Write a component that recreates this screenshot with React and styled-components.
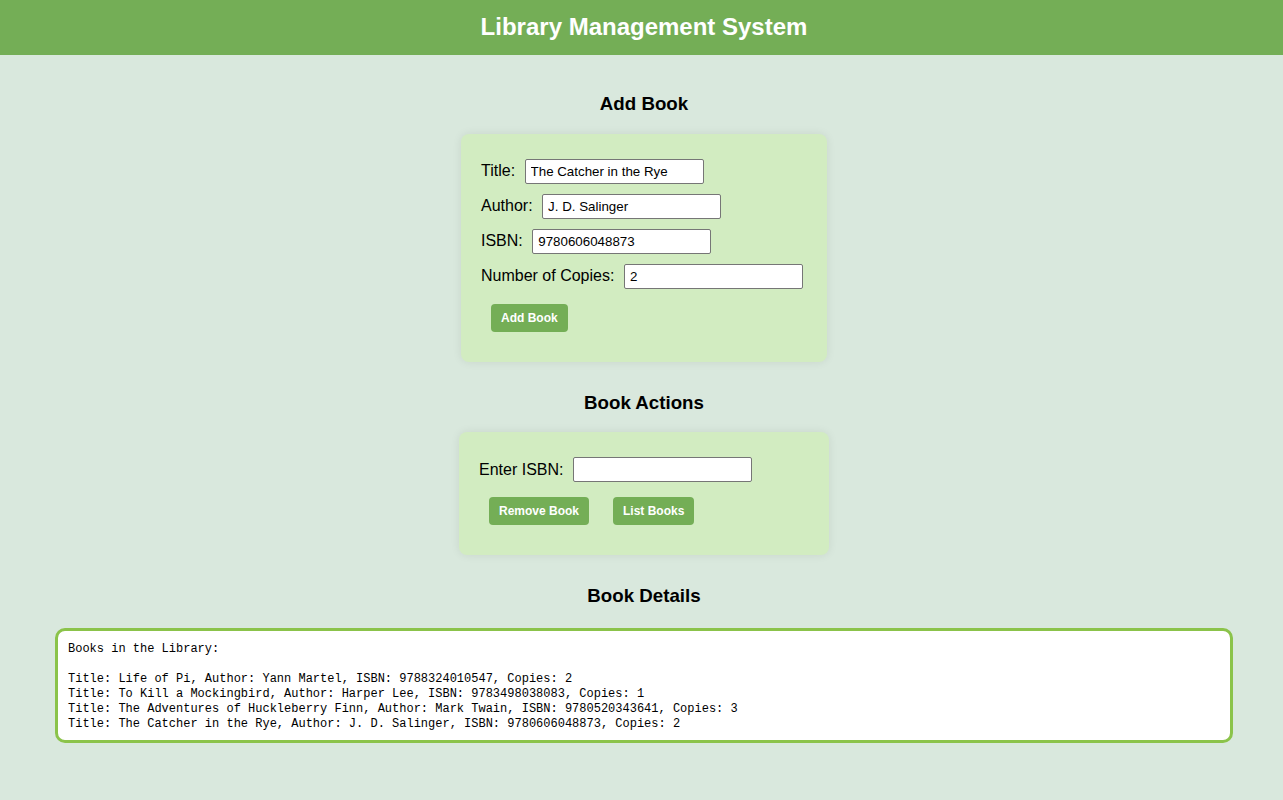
import React from "react";
import styled, { createGlobalStyle } from "styled-components";

const GlobalStyle = createGlobalStyle`
  html, body {
    margin: 0;
    padding: 0;
    background: #d9e8dd;
    font-family: "Liberation Sans", Arial, sans-serif;
    color: #000;
  }
  * { box-sizing: border-box; }
`;

const Header = styled.header`
  height: 55px;
  background: #74ae56;
  display: flex;
  align-items: center;
  justify-content: center;
  padding: 0 0 2px 5px;
`;

const AppTitle = styled.h1`
  margin: 0;
  color: #fff;
  font-size: 24px;
  font-weight: bold;
  line-height: 28px;
`;

const Main = styled.main`
  display: flex;
  flex-direction: column;
  align-items: center;
  padding: 38px 0 40px 5px;
`;

const SectionTitle = styled.h3`
  margin: 0 0 ${(p) => p.$gap || 18.5}px;
  font-size: 18.72px;
  line-height: 22px;
  font-weight: bold;
`;

const Card = styled.section`
  width: ${(p) => p.$width}px;
  display: flex;
  flex-direction: column;
  background: #d2ecc1;
  border-radius: 8px;
  padding: 20px;
  margin-bottom: 30px;
  box-shadow: 0 0 10px rgba(0, 0, 0, 0.08);
`;

const FieldRow = styled.div`
  display: flex;
  align-items: center;
  gap: 9.5px;
  margin: 5px 0;
`;

const Label = styled.label`
  font-size: 16px;
  line-height: 18px;
`;

const TextInput = styled.input`
  width: 179px;
  height: 25px;
  padding: 4px 5px;
  border: 1px solid #767676;
  border-radius: 2px;
  background: #fff;
  font-family: "Liberation Sans", Arial, sans-serif;
  font-size: 13.33px;
  color: #000;
  outline: none;
`;

const ButtonRow = styled.div`
  display: flex;
  gap: 24px;
  padding: 0 10px;
  margin: 10px 0;
`;

const Button = styled.button`
  background: #74ae56;
  color: #fff;
  border: none;
  border-radius: 4px;
  padding: 7px 10px;
  font-family: "Liberation Sans", Arial, sans-serif;
  font-size: 12px;
  line-height: 14px;
  font-weight: bold;
  cursor: pointer;
`;

const Output = styled.pre`
  align-self: stretch;
  margin: 0 50px;
  background: #fff;
  border: 3px solid #8bc34a;
  border-radius: 10px;
  padding: 11px 10px 8px;
  font-family: "Liberation Mono", "DejaVu Sans Mono", monospace;
  font-size: 12px;
  line-height: 15px;
  color: #000;
  white-space: pre;
`;

const books = [
  { title: "Life of Pi", author: "Yann Martel", isbn: "9788324010547", copies: 2 },
  { title: "To Kill a Mockingbird", author: "Harper Lee", isbn: "9783498038083", copies: 1 },
  { title: "The Adventures of Huckleberry Finn", author: "Mark Twain", isbn: "9780520343641", copies: 3 },
  { title: "The Catcher in the Rye", author: "J. D. Salinger", isbn: "9780606048873", copies: 2 },
];

const outputText =
  "Books in the Library:\n\n" +
  books
    .map(
      (b) =>
        `Title: ${b.title}, Author: ${b.author}, ISBN: ${b.isbn}, Copies: ${b.copies}`
    )
    .join("\n");

export default function App() {
  return (
    <>
      <GlobalStyle />
      <Header>
        <AppTitle>Library Management System</AppTitle>
      </Header>
      <Main>
        <SectionTitle>Add Book</SectionTitle>
        <Card $width={366}>
          <FieldRow>
            <Label htmlFor="title">Title:</Label>
            <TextInput id="title" defaultValue="The Catcher in the Rye" />
          </FieldRow>
          <FieldRow>
            <Label htmlFor="author">Author:</Label>
            <TextInput id="author" defaultValue="J. D. Salinger" />
          </FieldRow>
          <FieldRow>
            <Label htmlFor="isbn">ISBN:</Label>
            <TextInput id="isbn" defaultValue="9780606048873" />
          </FieldRow>
          <FieldRow>
            <Label htmlFor="copies">Number of Copies:</Label>
            <TextInput id="copies" defaultValue="2" />
          </FieldRow>
          <ButtonRow>
            <Button>Add Book</Button>
          </ButtonRow>
        </Card>

        <SectionTitle>Book Actions</SectionTitle>
        <Card $width={370}>
          <FieldRow>
            <Label htmlFor="action-isbn">Enter ISBN:</Label>
            <TextInput id="action-isbn" defaultValue="" />
          </FieldRow>
          <ButtonRow>
            <Button>Remove Book</Button>
            <Button>List Books</Button>
          </ButtonRow>
        </Card>

        <SectionTitle $gap={21}>Book Details</SectionTitle>
        <Output>{outputText}</Output>
      </Main>
    </>
  );
}
